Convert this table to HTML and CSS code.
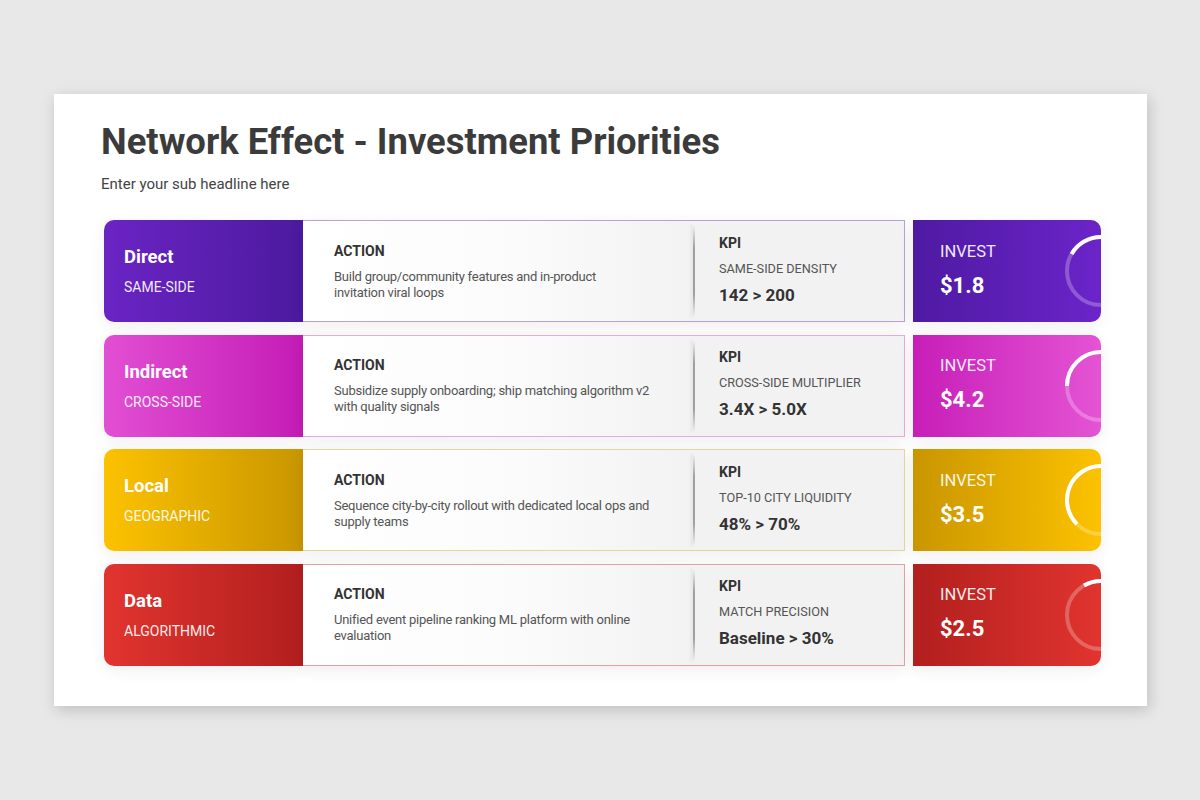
FILE: index.html
```html
<!DOCTYPE html>
<html lang="en">
<head>
<meta charset="utf-8">
<title>Network Effect - Investment Priorities</title>
<link rel="stylesheet" href="styles.css">
</head>
<body>
<div class="slide">
  <h1 class="title">Network Effect - Investment Priorities</h1>
  <p class="sub">Enter your sub headline here</p>
  <div class="rows">
    <div class="row purple">
      <div class="cat"><div class="cat-name">Direct</div><div class="cat-sub">SAME-SIDE</div></div>
      <div class="mid">
        <div class="action"><div class="label">ACTION</div><div class="desc">Build group/community features and in-product<br>invitation viral loops</div></div>
        <div class="kpi"><div class="label">KPI</div><div class="kpi-name">SAME-SIDE DENSITY</div><div class="kpi-val">142 &gt; 200</div></div>
      </div>
      <div class="invest"><div class="inv-label">INVEST</div><div class="inv-val">$1.8</div>
        <svg class="ring" viewBox="0 0 80 80" width="80" height="80"><circle cx="40" cy="40" r="34" class="ring-bg"/><path d="M40 6 A34 34 0 0 0 10.6 23" class="ring-fg"/></svg>
      </div>
    </div>
    <div class="row magenta">
      <div class="cat"><div class="cat-name">Indirect</div><div class="cat-sub">CROSS-SIDE</div></div>
      <div class="mid">
        <div class="action"><div class="label">ACTION</div><div class="desc">Subsidize supply onboarding; ship matching algorithm v2 with quality signals</div></div>
        <div class="kpi"><div class="label">KPI</div><div class="kpi-name">CROSS-SIDE MULTIPLIER</div><div class="kpi-val">3.4X &gt; 5.0X</div></div>
      </div>
      <div class="invest"><div class="inv-label">INVEST</div><div class="inv-val">$4.2</div>
        <svg class="ring" viewBox="0 0 80 80" width="80" height="80"><circle cx="40" cy="40" r="34" class="ring-bg"/><path d="M40 6 A34 34 0 0 0 6 40" class="ring-fg"/></svg>
      </div>
    </div>
    <div class="row gold">
      <div class="cat"><div class="cat-name">Local</div><div class="cat-sub">GEOGRAPHIC</div></div>
      <div class="mid">
        <div class="action"><div class="label">ACTION</div><div class="desc">Sequence city-by-city rollout with dedicated local ops and supply teams</div></div>
        <div class="kpi"><div class="label">KPI</div><div class="kpi-name">TOP-10 CITY LIQUIDITY</div><div class="kpi-val">48% &gt; 70%</div></div>
      </div>
      <div class="invest"><div class="inv-label">INVEST</div><div class="inv-val">$3.5</div>
        <svg class="ring" viewBox="0 0 80 80" width="80" height="80"><circle cx="40" cy="40" r="34" class="ring-bg"/><path d="M40 6 A34 34 0 0 0 15.96 64.04" class="ring-fg"/></svg>
      </div>
    </div>
    <div class="row red">
      <div class="cat"><div class="cat-name">Data</div><div class="cat-sub">ALGORITHMIC</div></div>
      <div class="mid">
        <div class="action"><div class="label">ACTION</div><div class="desc">Unified event pipeline ranking ML platform with online evaluation</div></div>
        <div class="kpi"><div class="label">KPI</div><div class="kpi-name">MATCH PRECISION</div><div class="kpi-val">Baseline &gt; 30%</div></div>
      </div>
      <div class="invest"><div class="inv-label">INVEST</div><div class="inv-val">$2.5</div>
        <svg class="ring" viewBox="0 0 80 80" width="80" height="80"><circle cx="40" cy="40" r="34" class="ring-bg"/><path d="M40 6 A34 34 0 0 0 23 10.6" class="ring-fg"/></svg>
      </div>
    </div>
  </div>
</div>
</body>
</html>
```
FILE: styles.css
```css
* { box-sizing: border-box; }
html, body { margin: 0; padding: 0; }
body {
  width: 1200px;
  height: 800px;
  background: #e9e8e9;
  font-family: Roboto, "Liberation Sans", sans-serif;
  display: flex;
  align-items: center;
  justify-content: center;
}
.slide {
  width: 1093px;
  height: 612px;
  margin-left: 1px;
  background: #ffffff;
  box-shadow: 2px 4px 14px rgba(0,0,0,0.18);
  padding: 26px 46px 0 47px;
}
.title {
  margin: 0;
  font-size: 36.4px;
  line-height: 44px;
  font-weight: 700;
  color: #3b3b3b;
}
.sub {
  margin: 11px 0 0 0;
  font-size: 15px;
  line-height: 18px;
  color: #444;
}
.rows {
  margin: 27px 0 0 3px;
  display: flex;
  flex-direction: column;
  gap: 12.5px;
}
.row {
  display: flex;
  height: 102px;
}
.cat {
  width: 199px;
  flex: none;
  border-radius: 10px 0 0 10px;
  padding-left: 20px;
  display: flex;
  flex-direction: column;
  justify-content: center;
  gap: 11px;
  color: #fff;
  box-shadow: 0 4px 16px rgba(0,0,0,0.07);
}
.cat-name { font-size: 18.5px; font-weight: 700; line-height: 22px; }
.cat-sub { font-size: 14px; line-height: 17px; opacity: 0.9; }
.mid {
  width: 602px;
  flex: none;
  display: flex;
  border: 1px solid #ccc;
  border-left: none;
  box-shadow: 0 4px 16px rgba(0,0,0,0.07);
}
.action {
  width: 391px;
  flex: none;
  padding: 0 30px 0 31px;
  background: linear-gradient(to right, #ffffff 0%, #fbfbfb 55%, #f2f2f2 100%);
  display: flex;
  flex-direction: column;
  justify-content: center;
  gap: 9px;
}
.label { font-size: 14px; font-weight: 700; color: #333; line-height: 17px; }
.desc { font-size: 13px; line-height: 16px; color: #555; letter-spacing: -0.25px; max-width: 318px; }
.action .desc { margin-bottom: -1px; }
.kpi {
  flex: 1;
  position: relative;
  background: #f2f2f2;
  padding: 0 0 0 25px;
  display: flex;
  flex-direction: column;
  justify-content: center;
  gap: 9px;
}
.kpi .label { margin-top: -3px; }
.kpi::before {
  content: "";
  position: absolute;
  left: -1px;
  top: 4px;
  bottom: 4px;
  width: 2px;
  background: linear-gradient(to bottom, rgba(160,160,160,0) 0%, rgba(150,150,150,0.9) 25%, rgba(150,150,150,0.9) 75%, rgba(160,160,160,0) 100%);
  box-shadow: -2px 0 3px rgba(0,0,0,0.08);
}
.kpi-name { font-size: 12.7px; line-height: 15px; color: #555; }
.kpi-val { font-size: 17px; font-weight: 700; line-height: 20px; color: #333; }
.invest {
  flex: 1;
  margin-left: 8px;
  border-radius: 0 10px 10px 0;
  position: relative;
  overflow: hidden;
  padding-left: 27px;
  display: flex;
  flex-direction: column;
  justify-content: center;
  gap: 13px;
  color: #fff;
  box-shadow: 0 4px 16px rgba(0,0,0,0.07);
}
.inv-label { font-size: 16.5px; line-height: 19px; opacity: 0.9; margin-top: -3px; }
.inv-val { font-size: 22px; font-weight: 700; line-height: 24px; }
.ring {
  position: absolute;
  right: -40px;
  top: 50%;
  margin-top: -40px;
}
.ring-bg { fill: none; stroke: rgba(255,255,255,0.25); stroke-width: 4; }
.ring-fg { fill: none; stroke: #ffffff; stroke-width: 4; }

.purple .cat { background: linear-gradient(to right, #6a24c4, #4c1a9e); }
.purple .invest { background: linear-gradient(to right, #4e1aa2, #6b24c9); }
.purple .mid { border-color: #b6a2d6; }
.magenta .cat { background: linear-gradient(to right, #e24fd3, #c41cb6); }
.magenta .invest { background: linear-gradient(to right, #c71eb8, #e454d4); }
.magenta .mid { border-color: #eaa8e2; }
.gold .cat { background: linear-gradient(to right, #fcc200, #c99600); }
.gold .invest { background: linear-gradient(to right, #c99600, #fcc200); }
.gold .mid { border-color: #e9d59c; }
.red .cat { background: linear-gradient(to right, #e1342f, #b11f1e); }
.red .invest { background: linear-gradient(to right, #b11f1e, #e1342f); }
.red .mid { border-color: #dda2a2; }
```
